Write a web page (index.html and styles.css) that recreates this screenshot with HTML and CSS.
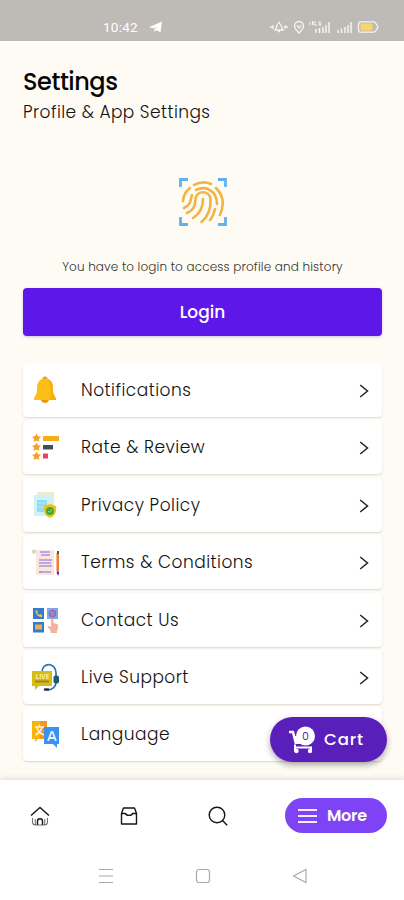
FILE: index.html
```
<!DOCTYPE html>
<html lang="en">
<head>
<meta charset="utf-8">
<title>Settings</title>
<link rel="stylesheet" href="styles.css">
</head>
<body>
<header class="status">
  <span class="time">10:42</span>
  <svg class="plane" width="14" height="12" viewBox="0 0 14 12"><path d="M0 6.2 13 .5 11.5 11.5 7.5 9 5.5 11 5 7.4Z" fill="#fff"/><path d="m5 7.4 3-2-2 3" fill="#c9c5bf"/></svg>
  <svg class="signals" width="112" height="16" viewBox="0 0 112 16" fill="none" stroke="#f7f5f1" stroke-width="1.3">
    <path d="M1 8h3M16 8h3M4 6v4M16 6v4M6 11c2-2 1-6 4-7 3 1 2 5 4 7ZM9 12.5h2M10 2.5V4"/>
    <path d="M30 14c-3-3-4.500-4.500-4.500-7a4.500 4.500 0 0 1 9 0c0 2.500-1.500 4-4.500 7Z"/><path d="m28 6 2 3 2-3"/>
    <path d="M41 3v3M43.500 2v4M47 3h-2v3h3M52 3h-2v3h2V4" stroke-width="1"/>
    <path d="M47 10v4M50.500 9v5M54 8v6M57 6v8M60 3v11M69 11v3M72.500 9.500V14M76 8v6M79 6v8M82 3v11" stroke-width="1.500"/>
    <path d="M92 2.800h12.500c2 0 3.500 3 4.500 5.200-1 2.200-2.500 5.200-4.500 5.200H92c-1.500 0-2.500-1-2.500-2.500V5.300c0-1.500 1-2.500 2.500-2.500Z"/><rect x="91.500" y="4.500" width="12" height="7" rx="1.500" fill="#f7d568" stroke="none"/>
  </svg>
</header>
<main class="page">
  <h1 class="title">Settings</h1>
  <p class="subtitle">Profile &amp; App Settings</p>
  <svg class="finger" width="50" height="50" viewBox="0 0 50 50" fill="none">
    <path d="M2.500 10V2.500H10M40 2.500h7.500V10M2.500 40v7.500H10M40 47.500h7.500V40" stroke="#64b0ea" stroke-width="2.800"/>
    <g stroke="#f2b441" stroke-width="2.600" stroke-linecap="round">
      <path d="M16 8c5-3 12-3.500 17-1"/>
      <path d="M38 11c8 8 8 18 4 27"/>
      <path d="M12 11c-4 3-6.500 7-7 13"/>
      <path d="M18 13c10-5 21 1 21 14M37 32c-1 4-2 8-5 11"/>
      <path d="M14 18c-2 5 0 9-8 13"/>
      <path d="M9 36c7-3 8-7 8.500-14 1-9 14-9 15 0 .5 9-2 17-9 23"/>
      <path d="M25 22c0 8-2 14-10 19"/>
    </g>
  </svg>
  <p class="hint">You have to login to access profile and history</p>
  <button class="login">Login</button>
  <ul class="list">
    <li class="row">
      <svg class="icon" viewBox="0 0 28 28"><path d="M11.500 3a2.500 2.500 0 0 1 5 0v2h-5z" fill="#e8951c"/><path d="M14 2.500c-7 0-8 6-8 12 0 4-2 5-3 8 0 1 0 1.500 1 1.500h20c1 0 1-.5 1-1.500-1-3-3-4-3-8 0-6-1-12-8-12Z" fill="#fcbd18"/><path d="M17 3c5 2 5 7 5 12 0 4 2 5 3 8v1h-6c2-7 1-15-2-21Z" fill="#f9ad08"/><path d="M10 24h8c-1 4-7 4-8 0Z" fill="#e9960b"/></svg>
      <span class="label">Notifications</span><svg class="chev" viewBox="0 0 10 14"><path d="m1.200 1 7.300 6-7.300 6"/></svg></li>
    <li class="row">
      <svg class="icon" viewBox="0 0 28 28"><g fill="#f79f2b"><path id="star" d="m5.500 .5 1.500 2.800 3 .5-2.200 2.200.6 3-2.900-1.500L2.600 9l.6-3L1 3.800l3-.5Z"/><use href="#star" y="9"/><use href="#star" y="18"/></g><path fill="#f4ae17" d="M12 3h16v5H12z"/><path fill="#3d5358" d="M12 12h10v4.500H12z"/><path fill="#ee3d6b" d="M12 20.500h5v5h-5z"/></svg>
      <span class="label">Rate &amp; Review</span><svg class="chev" viewBox="0 0 10 14"><path d="m1.200 1 7.300 6-7.300 6"/></svg></li>
    <li class="row">
      <svg class="icon" viewBox="0 0 28 28"><path d="M6 1h17v17H6z" fill="#e7eed6"/><path d="M3 4h17v21H3z" fill="#cdf2f8"/><path d="M6 9h10v12H6z" fill="#91dcf2"/><path d="M7 12h8M7 16h8" stroke="#b8edf8"/><path d="m19 13 6 2c1 6-1 10-6 12-5-2-7-6-6-12Z" fill="#ecc319"/><circle cx="19" cy="20" r="4" fill="#45a53a"/><path d="m17 20 1.500 1.500 2.500-3" stroke="#b7df70" fill="none"/></svg>
      <span class="label">Privacy Policy</span><svg class="chev" viewBox="0 0 10 14"><path d="m1.200 1 7.300 6-7.300 6"/></svg></li>
    <li class="row">
      <svg class="icon" viewBox="0 0 28 28"><path d="M2 2h21v25H5V6H2z" fill="#fae6df"/><circle cx="2.800" cy="3.500" r="2" fill="#d9d4bd"/><path d="M9 4h10M10 7h9M8 12h13M8 15h12M8 18h13M11 24h9" stroke="#a994e0" stroke-width="1.300"/><path d="M8 24h3" stroke="#c79a93" stroke-width="2"/><path d="M25.500 5h3v18l-1.500 3-1.500-3z" fill="#ef7b2f"/><path d="M26 3h2v3h-2z" fill="#5e4961"/><path d="M25.500 24h3l-1.500 4z" fill="#3f2fa1"/></svg>
      <span class="label">Terms &amp; Conditions</span><svg class="chev" viewBox="0 0 10 14"><path d="m1.200 1 7.300 6-7.300 6"/></svg></li>
    <li class="row">
      <svg class="icon" viewBox="0 0 28 28"><path d="M2 2h11v11H2zM2 16h11v10.500H2z" fill="#347dce"/><path d="M16 2h11v11H16z" fill="#79a8ed"/><path d="M4.500 4.500c0 4 2.500 6.500 6.500 6.500V9L9 8 8 9 6 7l1-1-.5-1.500z" fill="#f6c33e"/><path d="M4 18.500h7v5H4z" fill="#f0ad4b"/><circle cx="21.500" cy="7.500" r="3" fill="none" stroke="#b25b9a" stroke-width="1.500"/><circle cx="21.500" cy="7.500" r="1" fill="#b25b9a"/><path d="M20 14c0-2 2.500-2 2.500 0v3l3.500 1c2 1 1 5 0 7v2h-6c0-3-2-4-3.500-6 .5-1.500 2-1 3.500 0z" fill="#f4b19f"/></svg>
      <span class="label">Contact Us</span><svg class="chev" viewBox="0 0 10 14"><path d="m1.200 1 7.300 6-7.300 6"/></svg></li>
    <li class="row">
      <svg class="icon" viewBox="0 0 28 28"><path d="M11 9C11-1 25-1 25 10v9c0 5-4 8-9 8" fill="none" stroke="#2878b8" stroke-width="1.700"/><path d="M1 8h20v15H8l-4 4v-4H1z" fill="#d8bb16"/><text class="live" x="4.500" y="15.500">LIVE</text><path d="M4 18.500h14" stroke="#9d8623" stroke-width="2"/><rect x="22.500" y="12.500" width="5.500" height="8" rx="2" fill="#24586d"/><path d="M14 26.500h3" stroke="#27313b" stroke-width="2.500" stroke-linecap="round"/></svg>
      <span class="label">Live Support</span><svg class="chev" viewBox="0 0 10 14"><path d="m1.200 1 7.300 6-7.300 6"/></svg></li>
    <li class="row">
      <svg class="icon" viewBox="0 0 28 28"><path d="M1 1h15v18H7l-3 3v-3H1z" fill="#f9b50f"/><path d="M9 1h7v18H9z" fill="#f49422"/><path d="M13 7h15v17h-2v4l-4-4h-9z" fill="#3992f1"/><path d="M4 7h9M8.500 4.500V7M11 7c-1 4-3 6-6.500 8M6 8c1 3 4 6 7 7" stroke="#fff3dc" stroke-width="1.500" fill="none"/><path d="m17 21 3.500-9h1L25 21M18.300 18h5.400" stroke="#e0f0ff" stroke-width="1.800" fill="none"/></svg>
      <span class="label">Language</span></li>
  </ul>
</main>
<button class="cart">
  <svg width="28" height="28" viewBox="0 0 28 28"><path d="M1 6h4l3 12" fill="none" stroke="#fff" stroke-width="2.500"/><path d="M6 10h18l-1 8H8z" fill="#fff"/><circle cx="17.500" cy="10" r="9.500" fill="#fff"/><path d="M7 18.500v7M7 21.500h17M23 21v5" stroke="#fff" stroke-width="2"/><circle cx="8.500" cy="25" r="2.200" fill="#fff"/><circle cx="22" cy="25" r="2.200" fill="#fff"/><text class="count" x="17.500" y="13.500">0</text></svg>
  <span>Cart</span>
</button>
<footer class="bottom">
  <nav class="tabs">
    <svg class="tab" viewBox="0 0 20 20"><path d="m1 9.500 9-8 9 8"/><path class="soft" d="M2.500 12v4c0 2 1 3 3 3h9c2 0 3-1 3-3v-4M5.300 13v6M14.700 13v6"/><path d="M7.500 19v-4c0-3 5-3 5 0v4"/></svg>
    <svg class="tab" viewBox="0 0 20 20"><path d="M2.500 7.500V18h15V7.500L15.500 2h-11zM2 7.500h4.500C7 10 13 10 13.500 7.500H18"/></svg>
    <svg class="tab" viewBox="0 0 20 20"><circle cx="9" cy="9" r="7.800"/><path d="m14.500 14.500 4.700 4.700"/></svg>
    <button class="more"><svg width="19" height="16" viewBox="0 0 19 16"><path d="M0 2h19M0 8h19M0 14h19" stroke="#f4edff" stroke-width="2"/></svg><span>More</span></button>
  </nav>
  <div class="system">
    <svg viewBox="0 0 16 16"><path d="M1 1.500h14M1 8h14M1 14.500h14"/></svg>
    <svg viewBox="0 0 16 16"><rect x="1.500" y="1.500" width="13" height="13" rx="2.500"/></svg>
    <svg viewBox="0 0 16 16"><path d="M14 1.500v13L1.500 8z"/></svg>
  </div>
</footer>
</body>
</html>
```
FILE: styles.css
```
* { box-sizing: border-box; }
body {
  margin: 0; width: 404px; height: 900px; overflow: hidden; position: relative;
  background: #fefbf4; color: #111;
  font-family: Poppins, Inter, "Open Sans", sans-serif;
  display: flex; flex-direction: column;
}
h1, p, ul { margin: 0; padding: 0; }
button { border: 0; font: inherit; color: #fff; }
svg { display: block; flex: none; }
.status { height: 41px; flex: none; background: #bebab5; display: flex; align-items: center; padding: 13px 23px 0 103px; }
.time { font: 400 13.500px/16px Roboto, sans-serif; color: #fff; letter-spacing: .25px; width: 46px; }
.signals { margin-left: auto; }
.page { flex: 1; min-height: 0; padding: 23px 22px 0 23px; }
.title { font-size: 24px; line-height: 36px; font-weight: 500; letter-spacing: -.45px; color: #050505; }
.subtitle { font-size: 17px; line-height: 26px; font-weight: 300; letter-spacing: .43px; margin-top: -1px; }
.finger { margin: 52px auto 0; }
.hint { margin-top: 31px; text-align: center; font-size: 12px; line-height: 18px; font-weight: 300; letter-spacing: .15px; color: #333; white-space: nowrap; }
.login { display: block; width: 359px; height: 48px; margin-top: 12px; padding: 0 0 1px; border-radius: 4px; background: #5d17e8; font-size: 17px; font-weight: 500; box-shadow: 0 1px 3px #4b20a040; }
.list { list-style: none; margin-top: 27px; display: grid; gap: 3.400px; }
.row { height: 54px; background: #fff; border-radius: 4px; box-shadow: 0 1px 2px #00000024; display: flex; align-items: center; padding: 0 13px 0 8px; }
.icon { width: 28px; height: 28px; margin-right: 22px; }
.label { font-size: 17px; line-height: 26px; font-weight: 300; letter-spacing: .48px; flex: 1; }
.chev { width: 10px; height: 14px; margin-top: 2px; fill: none; stroke: #222; stroke-width: 1.500; }
.live { font: 700 6.500px "Open Sans", sans-serif; fill: #f8ec9f; }
.cart { position: absolute; left: 270px; top: 717px; width: 117px; height: 45px; border-radius: 23px; background: #5a1fba; display: flex; align-items: center; gap: 8px; padding: 0 0 0 18px; font-size: 16.500px; font-weight: 500; letter-spacing: .9px; box-shadow: 0 3px 6px #0005; }
.count { font: 400 11px Poppins, sans-serif; letter-spacing: 0; fill: #5a1fba; text-anchor: middle; }
.bottom { height: 120px; flex: none; background: #fff; box-shadow: 0 -1px 6px #00000024; z-index: 1; }
.tabs { height: 71px; display: flex; align-items: center; padding-left: 30px; }
.tab { width: 20px; height: 20px; margin-right: 69px; fill: none; stroke: #151515; stroke-width: 1.400; stroke-linejoin: round; }
.tab .soft { stroke: #777; stroke-width: 1.100; }
.tab:nth-child(3) { margin-right: 57px; }
.more { width: 102px; height: 35px; border-radius: 18px; background: #7e43f4; display: flex; align-items: center; gap: 10px; padding: 0 0 0 13px; font-size: 16px; font-weight: 600; letter-spacing: -.3px; }
.system { height: 50px; display: flex; justify-content: center; gap: 81px; padding: 17px 0 0 1px; }
.system svg { width: 16px; height: 16px; fill: none; stroke: #aaa; stroke-width: 1.200; }
```
